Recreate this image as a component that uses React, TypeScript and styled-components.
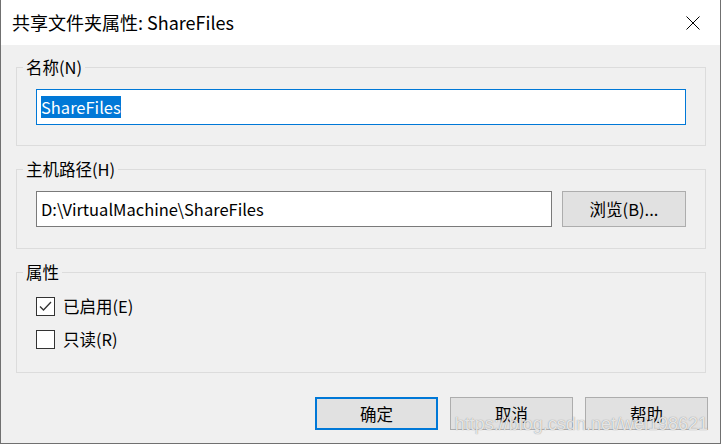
import styled, { createGlobalStyle } from 'styled-components';

const GlobalStyle = createGlobalStyle`
  html, body {
    margin: 0;
    padding: 0;
    background: #ffffff;
  }
  body {
    font-family: "Noto Sans CJK SC", sans-serif;
    font-size: 16.5px;
    color: #000000;
  }
`;

const Window = styled.div`
  position: relative;
  width: 721px;
  height: 444px;
  box-sizing: border-box;
  border: 1px solid #707070;
  border-top: none;
  display: flex;
  flex-direction: column;
  overflow: hidden;
`;

const TitleBar = styled.div`
  height: 45px;
  flex: none;
  background: #ffffff;
  display: flex;
  align-items: center;
  justify-content: space-between;
  padding: 0 20px 0 11px;
`;

const Title = styled.span`
  font-size: 18px;
  line-height: 24px;
  margin-top: -1px;
`;

const CloseButton = styled.button`
  width: 14px;
  height: 14px;
  padding: 0;
  border: none;
  background: none;
  display: flex;
`;

const Body = styled.div`
  flex: 1;
  background: #f0f0f0;
  padding: 12px 14px 12px 15px;
  display: flex;
  flex-direction: column;
  gap: 13px;
`;

const Group = styled.fieldset`
  margin: 0;
  padding: 0;
  border: 1px solid #dcdcdc;
  min-width: 0;
`;

const Legend = styled.legend`
  margin-left: 6px;
  padding: 0 3px;
  font-size: 16.5px;
  line-height: 20px;
  color: #000000;
`;

const GroupContent = styled.div<{ $bottom: number }>`
  padding: 12px 19px ${(p) => p.$bottom}px 19px;
  display: flex;
  flex-direction: column;
  gap: 9px;
`;

const Row = styled.div`
  display: flex;
  gap: 10px;
`;

const TextBox = styled.div<{ $focused?: boolean }>`
  box-sizing: border-box;
  height: 36px;
  flex: 1 1 auto;
  border: 1px solid ${(p) => (p.$focused ? '#0078d7' : '#7a7a7a')};
  background: #ffffff;
  padding: 0 4px;
  display: flex;
  align-items: center;
  font-size: 16.5px;
  white-space: nowrap;
`;

const Selected = styled.span`
  background: #0078d7;
  color: #ffffff;
  line-height: 22px;
`;

const Button = styled.button<{ $default?: boolean }>`
  box-sizing: border-box;
  flex: none;
  width: 124px;
  height: 36px;
  background: #e1e1e1;
  border: ${(p) => (p.$default ? '2px solid #0078d7' : '1px solid #adadad')};
  font-family: "Noto Sans CJK SC", sans-serif;
  font-size: 16.5px;
  color: #000000;
  padding: 0;
`;

const FooterButton = styled(Button)`
  width: 123px;
  height: 33px;
`;

const CheckRow = styled.label`
  display: flex;
  align-items: center;
  gap: 8px;
  height: 24px;
  font-size: 16.5px;
`;

const CheckBox = styled.span`
  box-sizing: border-box;
  width: 19px;
  height: 19px;
  border: 1px solid #333333;
  background: #ffffff;
  display: flex;
  align-items: center;
  justify-content: center;
`;

const Footer = styled.div`
  margin: 11px -2px 0 0;
  display: flex;
  justify-content: flex-end;
  gap: 12px;
`;

const Watermark = styled.span`
  position: absolute;
  right: 12px;
  bottom: 8px;
  font-family: "Liberation Sans", sans-serif;
  font-size: 18px;
  color: rgba(255, 255, 255, 0.8);
  text-shadow: 0 0 1px rgba(110, 110, 110, 0.9);
  pointer-events: none;
`;

function Check({ checked }: { checked?: boolean }) {
  return (
    <CheckBox>
      {checked && (
        <svg width="13" height="11" viewBox="0 0 13 11">
          <polyline
            points="1,5.5 4.5,9 12,1"
            fill="none"
            stroke="#333"
            strokeWidth="1.3"
          />
        </svg>
      )}
    </CheckBox>
  );
}

export default function App() {
  return (
    <>
      <GlobalStyle />
      <Window>
        <TitleBar>
          <Title>共享文件夹属性: ShareFiles</Title>
          <CloseButton aria-label="关闭">
            <svg width="14" height="14" viewBox="0 0 14 14">
              <path d="M0.5 0.5 L13.5 13.5 M13.5 0.5 L0.5 13.5" stroke="#000" strokeWidth="1" />
            </svg>
          </CloseButton>
        </TitleBar>
        <Body>
          <Group>
            <Legend>名称(N)</Legend>
            <GroupContent $bottom={20}>
              <TextBox $focused>
                <Selected>ShareFiles</Selected>
              </TextBox>
            </GroupContent>
          </Group>

          <Group>
            <Legend>主机路径(H)</Legend>
            <GroupContent $bottom={21}>
              <Row>
                <TextBox>D:\VirtualMachine\ShareFiles</TextBox>
                <Button>浏览(B)...</Button>
              </Row>
            </GroupContent>
          </Group>

          <Group>
            <Legend>属性</Legend>
            <GroupContent $bottom={21}>
              <CheckRow>
                <Check checked />
                已启用(E)
              </CheckRow>
              <CheckRow>
                <Check />
                只读(R)
              </CheckRow>
            </GroupContent>
          </Group>

          <Footer>
            <FooterButton $default>确定</FooterButton>
            <FooterButton>取消</FooterButton>
            <FooterButton>帮助</FooterButton>
          </Footer>
        </Body>
        <Watermark>https://blog.csdn.net/wei198621</Watermark>
      </Window>
    </>
  );
}
